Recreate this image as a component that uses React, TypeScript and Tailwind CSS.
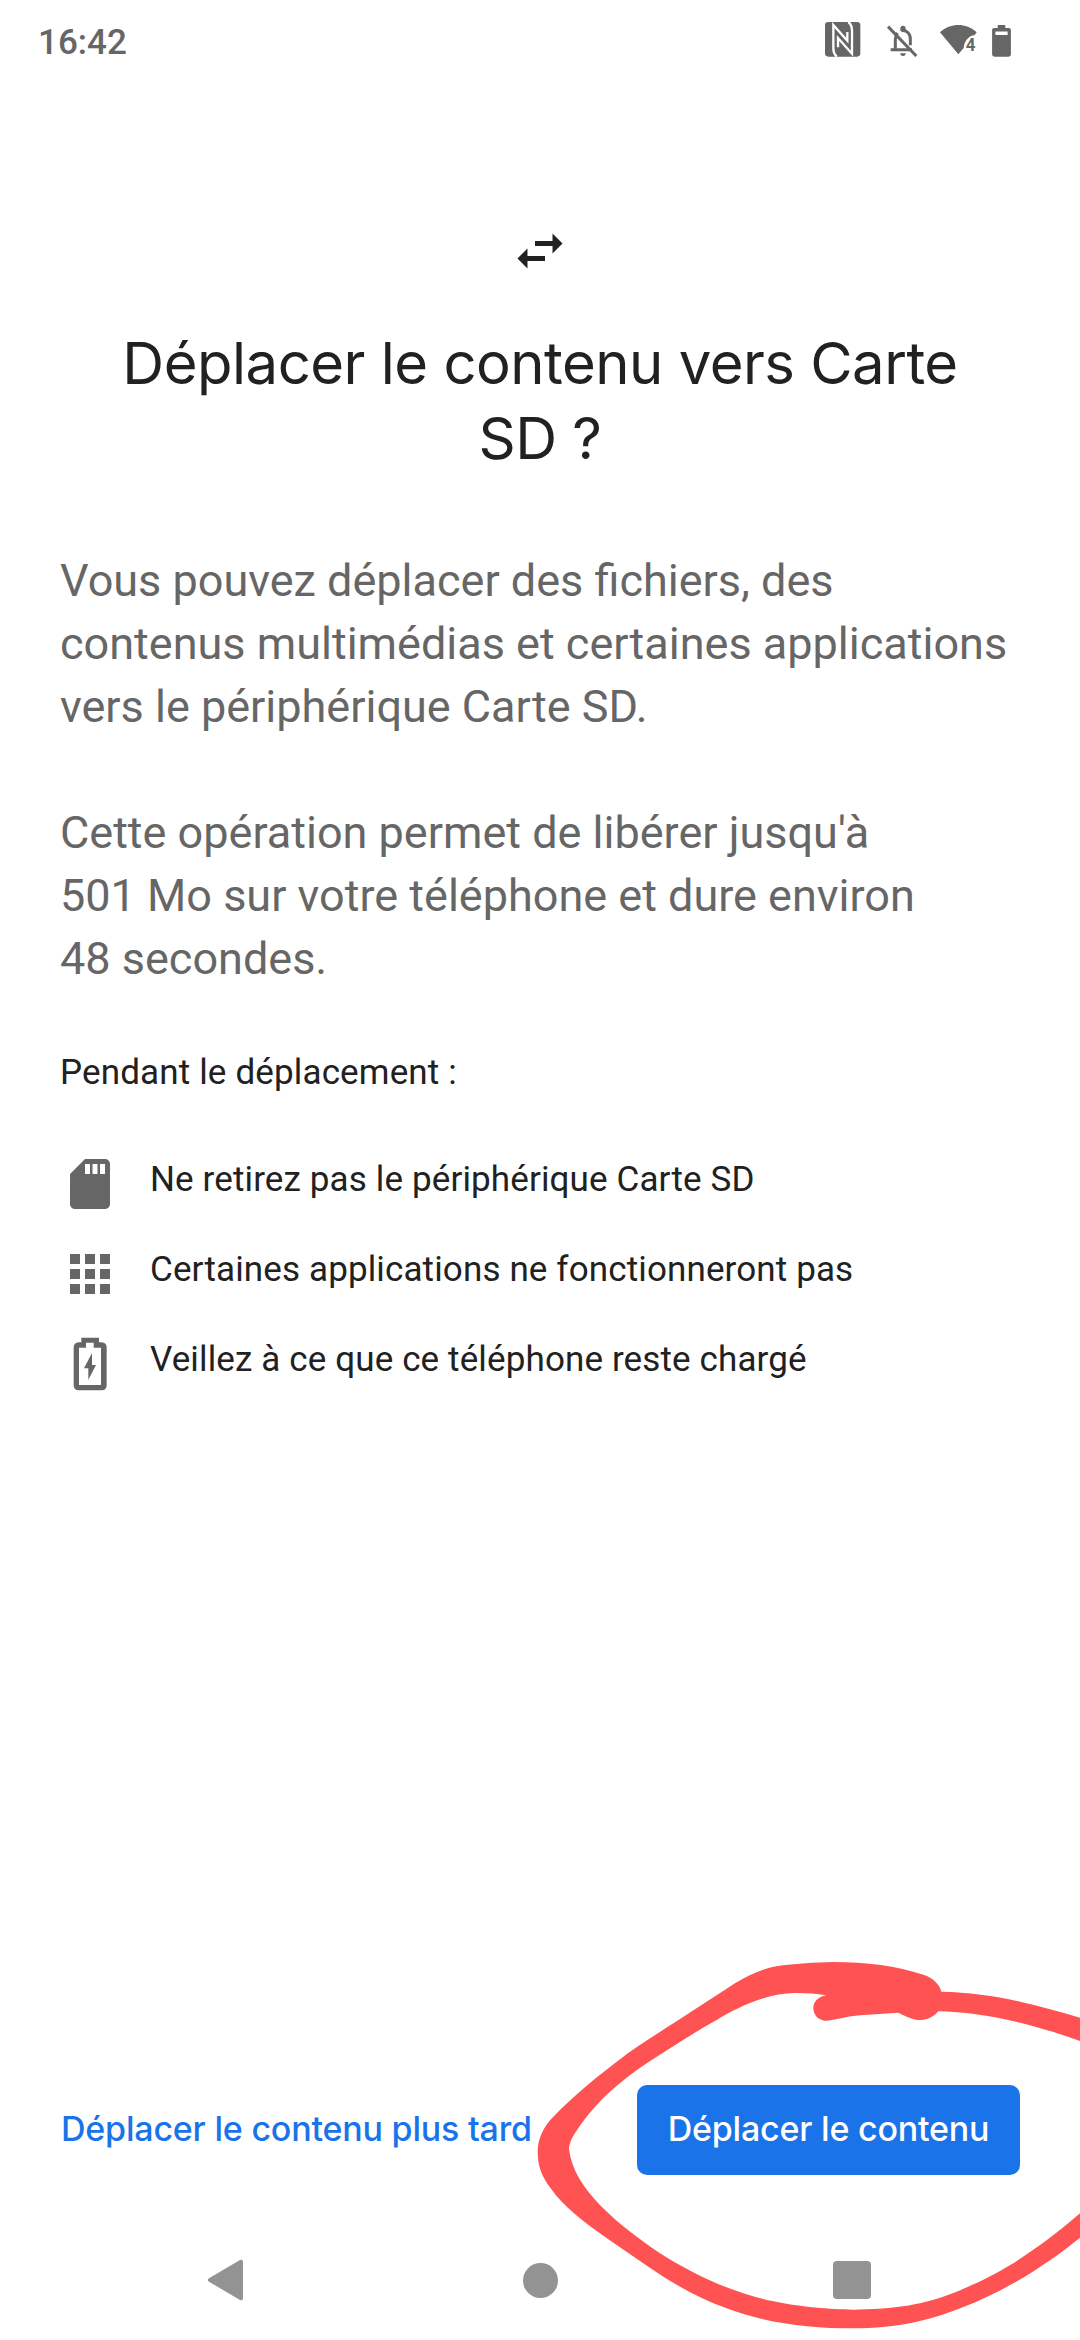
import type { ReactNode } from 'react';
import { MdApps, MdSdStorage, MdSwapHoriz } from 'react-icons/md';

const NfcIcon = () => (
  <svg viewBox="72 66 108 105" className="h-[35px] w-[36px]" fill="none">
    <rect x="72" y="66" width="106" height="104" rx="10" fill="#666666" />
    <path
      d="M107 170C100 163 97 155 97 145V75L139 122V96M142 66C150 72 153 82 153 92V161L111 114V142"
      stroke="white"
      strokeWidth="7"
    />
  </svg>
);

const BellOffIcon = () => (
  <svg viewBox="259 75 93 96" className="h-[32px] w-[31px]" fill="none" stroke="#666666" strokeWidth="9">
    <path d="M270 149H334M284 149V118C284 109 287 103 291 99M302 92C318 89 329 101 329 117V136" />
    <path d="M262 80L347 168" />
    <path d="M299 86A8 9 0 0 1 315 86V93H299ZM299 160H315A8 8 0 0 1 299 160Z" fill="#666666" stroke="none" />
  </svg>
);

const WifiIcon = () => (
  <svg viewBox="416 75 120 105" className="h-[35px] w-[40px] overflow-visible">
    <path
      d="M416 97C449 68 493 68 526 97L520 105C502 106 488 126 487 144L471 163Z"
      fill="#666666"
    />
    <text x="493" y="152" fontSize="56" fontWeight="700" fontFamily="Roboto, sans-serif" textLength="29" lengthAdjust="spacingAndGlyphs" fill="#666666">
      4
    </text>
  </svg>
);

const BatteryIcon = () => (
  <svg viewBox="573 74 57 97" className="h-[32px] w-[19px]">
    <path
      fillRule="evenodd"
      d="M590 74H613V83H624Q630 83 630 89V163Q630 170 623 170H580Q573 170 573 163V89Q573 83 579 83H590ZM583 94V104H620V94Z"
      fill="#666666"
    />
  </svg>
);

const ChargingIcon = () => (
  <svg viewBox="30 582 180 180" className="size-[60px]" fill="#666666">
    <path
      fillRule="evenodd"
      d="M94 593H147V607H155Q170 608 170 623V736Q170 751 155 751H86Q71 751 71 736V623Q71 608 86 607H94ZM108 608V623H87V735H153V623H131V608Z"
    />
    <path d="M126 639L102 685H115V719L138 675H126Z" />
  </svg>
);

const StatusBar = () => (
  <header className="flex h-[80px] shrink-0 items-start justify-between pl-[38px] pr-[69px]">
    <span className="pt-[22px] text-[35px] leading-[41px] font-medium text-[#666666]">16:42</span>
    <div className="flex items-start pt-[22px]">
      <NfcIcon />
      <div className="pt-[3px] pl-[26px]"><BellOffIcon /></div>
      <div className="pt-[3px] pl-[22px]"><WifiIcon /></div>
      <div className="pt-[3px] pl-[12px]"><BatteryIcon /></div>
    </div>
  </header>
);

interface TipProps {
  icon: ReactNode;
  label: string;
}

const Tip = ({ icon, label }: TipProps) => (
  <li className="flex h-[60px] items-start gap-[30px]">
    {icon}
    <span className="pt-px text-[35px] leading-[50px] tracking-[0.13px]">{label}</span>
  </li>
);

const NavigationBar = () => (
  <nav className="flex h-[120px] shrink-0 items-center justify-between px-[198px]">
    <svg viewBox="0 0 60 60" className="size-[60px]" fill="#939393" stroke="#939393" strokeWidth="4" strokeLinejoin="round">
      <path d="M12 30L43 11.8V48.2Z" />
    </svg>
    <div className="size-[35px] rounded-full bg-[#939393]" />
    <div className="flex size-[60px] items-center justify-center">
      <div className="size-[38px] rounded-[4px] bg-[#939393]" />
    </div>
  </nav>
);

// Hand-drawn circle around the primary button
const Highlight = () => (
  <svg viewBox="0 0 1680 1200" className="pointer-events-none absolute right-0 bottom-0 h-[400px] w-[560px]" fill="#ff5252">
    <path d="M1680 233C1560 198 1420 157 1264 155C1258 132 1240 114 1210 104C1130 78 1040 66 940 66C880 67 830 72 790 76C735 82 690 102 645 130L465 247C400 288 350 320 310 350C230 410 160 468 100 530C70 560 54 595 53 632C53 680 65 708 92 745C130 800 190 845 265 898L385 980C450 1025 530 1073 620 1105C740 1150 870 1165 1000 1165C1060 1165 1130 1160 1200 1143C1290 1122 1390 1080 1480 1030C1550 990 1620 942 1680 893V820C1610 880 1550 925 1480 970C1410 1012 1360 1035 1290 1063C1190 1100 1110 1107 1000 1109C930 1107 850 1103 740 1080C600 1045 500 990 420 940C350 890 300 855 245 800C190 745 155 690 147 628C148 600 165 580 185 550C240 475 300 425 380 370C450 325 510 285 590 240C650 204 740 158 830 159C860 159 890 161 918 166C895 170 880 185 880 205C881 230 900 243 920 242C950 240 985 228 1020 226L1135 218C1160 230 1180 241 1205 240C1230 238 1242 228 1255 214C1340 216 1440 230 1550 262C1610 278 1650 292 1680 303Z" />
  </svg>
);

export default function App() {
  return (
    <div className="relative flex h-[2340px] w-[1080px] flex-col overflow-hidden bg-white font-[Roboto,sans-serif] text-[#212121]">
      <StatusBar />

      <main className="flex flex-1 flex-col px-[60px] pt-[141px]">
        <MdSwapHoriz className="size-[60px] self-center" />
        <h1 className="mt-[45px] text-center font-[Inter,sans-serif] text-[58px] leading-[75px] tracking-[-0.5px]">
          Déplacer le contenu vers Carte SD&nbsp;?
        </h1>

        <div className="mt-[73px] flex flex-col gap-[63px] text-[45px] leading-[63px] text-[#666666]">
          <p>
            Vous pouvez déplacer des fichiers, des contenus multimédias et certaines applications vers le périphérique
            Carte SD.
          </p>
          <p>
            Cette opération permet de libérer jusqu'à 501&nbsp;Mo sur votre téléphone et dure environ 48&nbsp;secondes.
          </p>
        </div>

        <p className="mt-[58px] text-[35px] leading-[50px] tracking-[0.15px]">Pendant le déplacement&nbsp;:</p>
        <ul className="mt-[56px] flex flex-col gap-[30px]">
          <Tip icon={<MdSdStorage className="size-[60px] text-[#666666]" />} label="Ne retirez pas le périphérique Carte SD" />
          <Tip icon={<MdApps className="size-[60px] text-[#666666]" />} label="Certaines applications ne fonctionneront pas" />
          <Tip icon={<ChargingIcon />} label="Veillez à ce que ce téléphone reste chargé" />
        </ul>
      </main>

      <footer className="flex shrink-0 items-center justify-between pr-[60px] pb-[45px] pl-[61px] font-[Inter,sans-serif] text-[34px] font-medium tracking-[-0.2px]">
        <button className="pb-[3px] text-[#1a73e8]">Déplacer le contenu plus tard</button>
        <button className="h-[90px] w-[383px] rounded-[10px] bg-[#1a73e8] pb-[3px] text-white">Déplacer le contenu</button>
      </footer>

      <NavigationBar />
      <Highlight />
    </div>
  );
}
